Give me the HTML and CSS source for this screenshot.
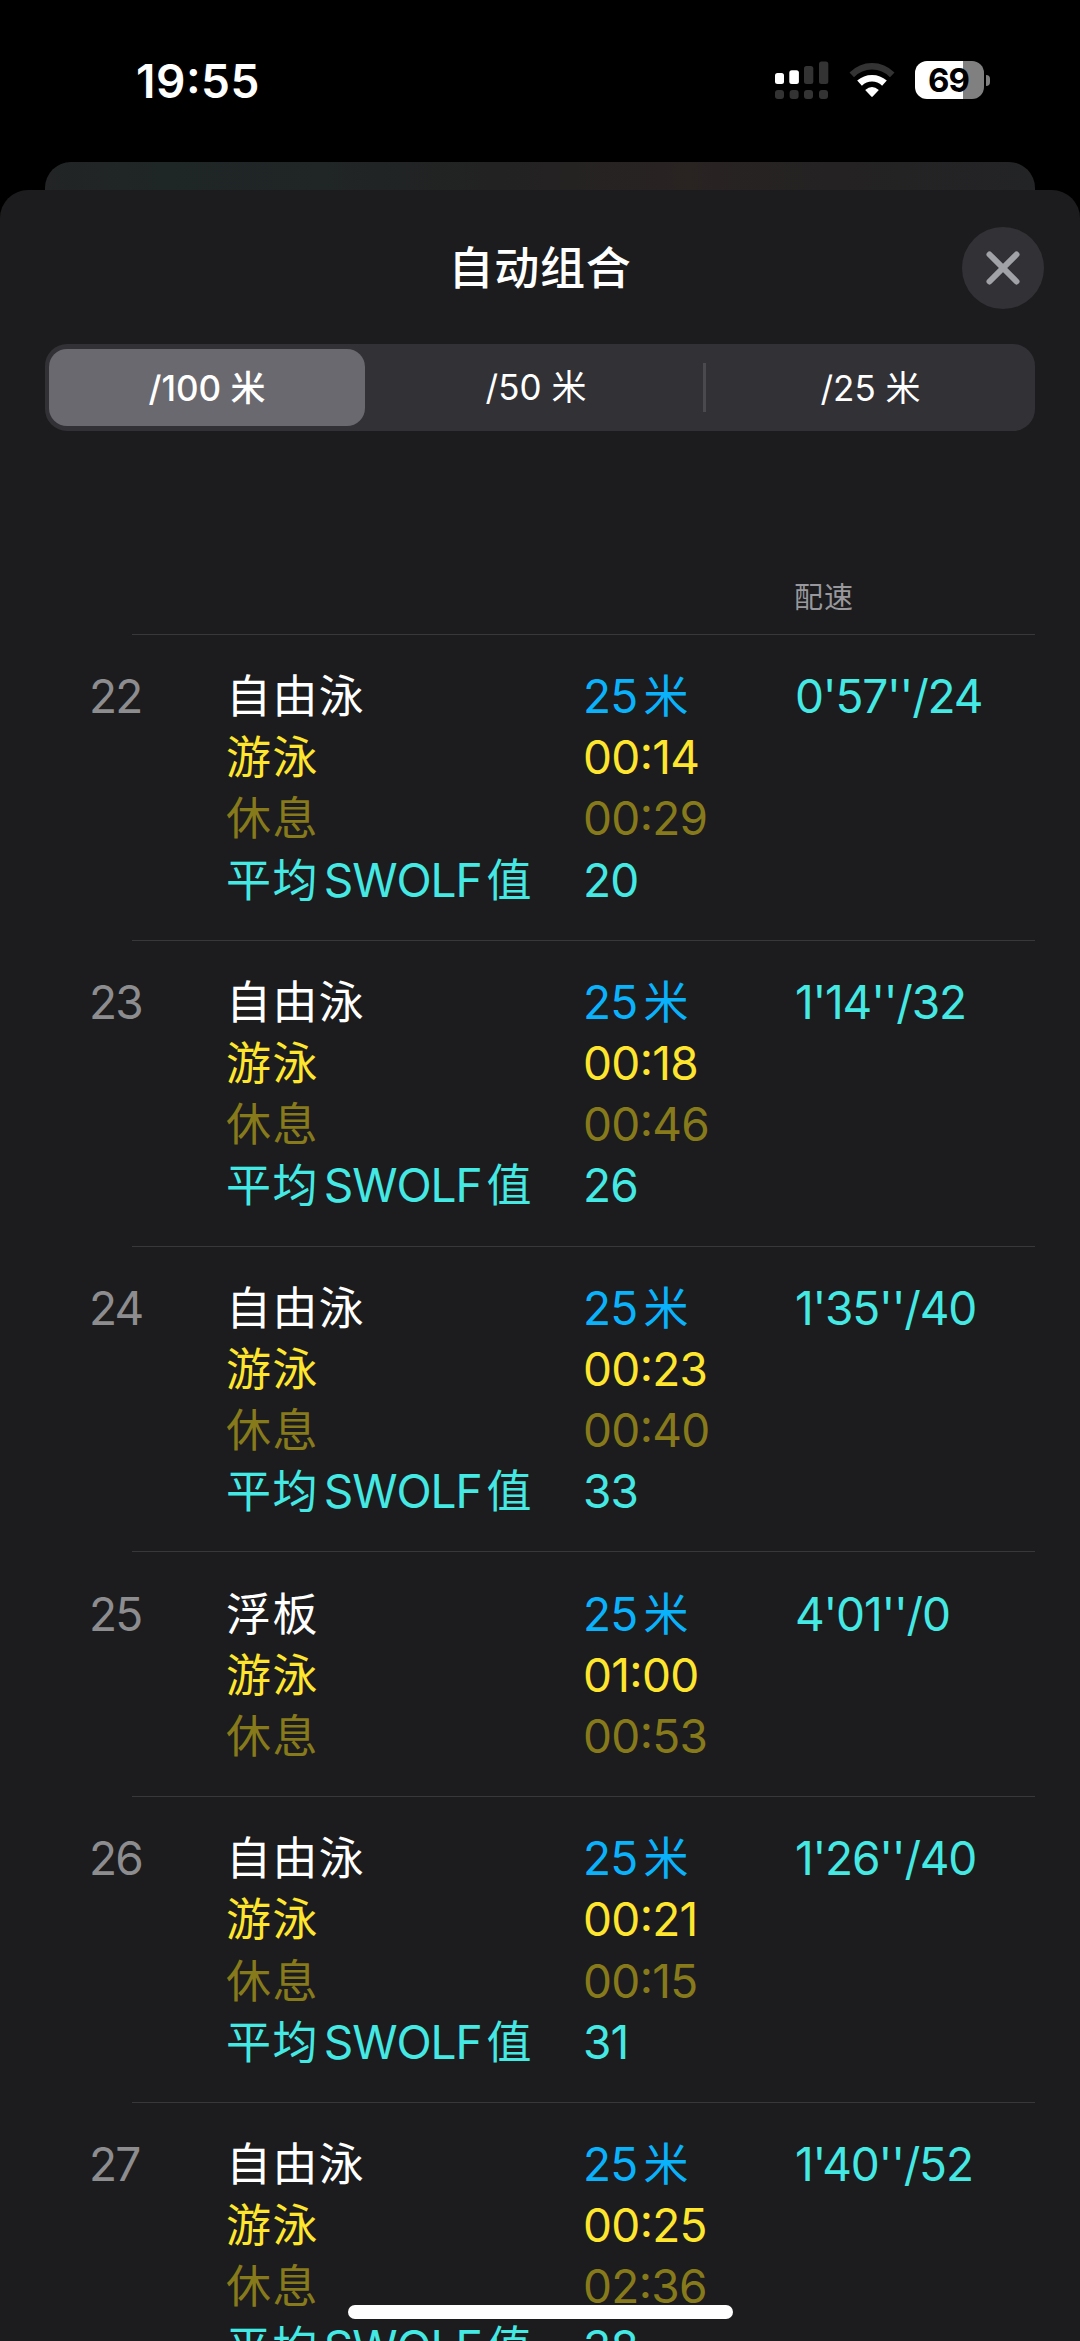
FILE: index.html
```html
<!DOCTYPE html>
<html lang="zh-CN">
<head>
  <meta charset="UTF-8" />
  <title>自动组合</title>
  <meta name="viewport" content="width=device-width, initial-scale=1">
  <link rel="stylesheet" href="styles.css">
</head>
<body>
  <header class="status-bar">
    <div class="clock">19:55</div>
    <div class="status-icons">
      <svg class="signal" width="54" height="38" viewBox="0 0 54 38">
        <g fill="#fff">
          <rect x="0" y="12" width="9" height="11" rx="2.5" />
          <rect x="14.3" y="9.3" width="9.6" height="13.7" rx="2.5" />
        </g>
        <g fill="#333">
          <rect x="29" y="5" width="9.3" height="18" rx="2.5" />
          <rect x="44" y="0.5" width="9.3" height="22.5" rx="2.5" />
          <rect x="0" y="29" width="9" height="9" rx="3" />
          <rect x="14.6" y="29" width="9" height="9" rx="3" />
          <rect x="29" y="29" width="9" height="9" rx="3" />
          <rect x="44" y="29" width="9" height="9" rx="3" />
        </g>
      </svg>
      <svg class="wifi" width="46" height="38" viewBox="0 0 46 38">
        <path d="M0.5 11.6 Q10 2 23 2 Q36 2 45.500 11.600 L41 16.200 Q33.500 8.500 23 8.500 Q12.500 8.500 5 16.200 Z" fill="#333" />
        <path d="M8.200 19.600 Q14.500 14 23 14 Q31.500 14 37.800 19.600 L33.100 24.700 Q28.700 20.500 23 20.500 Q17.300 20.500 12.900 24.700 Z" fill="#fff" />
        <path d="M16.200 29 Q23 23 29.800 29 L23.700 35.600 Q23 36.300 22.300 35.600 Z" fill="#fff" />
      </svg>
      <div class="battery"><span>69</span></div>
      <div class="battery-cap"></div>
    </div>
  </header>

  <div class="back-card"></div>

  <main class="sheet">
    <div class="sheet-head">
      <h1>自动组合</h1>
      <button class="close-btn" aria-label="关闭">
        <svg width="36" height="36" viewBox="0 0 36 36">
          <path d="M4.500 4.500 L31.500 31.500 M31.500 4.500 L4.500 31.500" stroke="#a1a1a8" stroke-width="6" stroke-linecap="round" />
        </svg>
      </button>
    </div>

    <div class="segments">
      <div class="segment active">/100 米</div>
      <div class="segment middle">/50 米</div>
      <div class="segment divided">/25 米</div>
    </div>

    <div class="table-head"><span>配速</span></div>

    <section class="row">
      <div class="num">22</div>
      <div class="labels">
        <p>自由泳</p>
        <p class="swim">游泳</p>
        <p class="rest">休息</p>
        <p class="swolf">平均<span class="latin">SWOLF</span>值</p>
      </div>
      <div class="values">
        <p class="distance">25<span class="unit">米</span></p>
        <p class="swim">00:14</p>
        <p class="rest">00:29</p>
        <p class="swolf">20</p>
      </div>
      <div class="pace">0'57''/24</div>
    </section>

    <section class="row">
      <div class="num">23</div>
      <div class="labels">
        <p>自由泳</p>
        <p class="swim">游泳</p>
        <p class="rest">休息</p>
        <p class="swolf">平均<span class="latin">SWOLF</span>值</p>
      </div>
      <div class="values">
        <p class="distance">25<span class="unit">米</span></p>
        <p class="swim">00:18</p>
        <p class="rest">00:46</p>
        <p class="swolf">26</p>
      </div>
      <div class="pace">1'14''/32</div>
    </section>

    <section class="row">
      <div class="num">24</div>
      <div class="labels">
        <p>自由泳</p>
        <p class="swim">游泳</p>
        <p class="rest">休息</p>
        <p class="swolf">平均<span class="latin">SWOLF</span>值</p>
      </div>
      <div class="values">
        <p class="distance">25<span class="unit">米</span></p>
        <p class="swim">00:23</p>
        <p class="rest">00:40</p>
        <p class="swolf">33</p>
      </div>
      <div class="pace">1'35''/40</div>
    </section>

    <section class="row">
      <div class="num">25</div>
      <div class="labels">
        <p>浮板</p>
        <p class="swim">游泳</p>
        <p class="rest">休息</p>
      </div>
      <div class="values">
        <p class="distance">25<span class="unit">米</span></p>
        <p class="swim">01:00</p>
        <p class="rest">00:53</p>
      </div>
      <div class="pace">4'01''/0</div>
    </section>

    <section class="row">
      <div class="num">26</div>
      <div class="labels">
        <p>自由泳</p>
        <p class="swim">游泳</p>
        <p class="rest">休息</p>
        <p class="swolf">平均<span class="latin">SWOLF</span>值</p>
      </div>
      <div class="values">
        <p class="distance">25<span class="unit">米</span></p>
        <p class="swim">00:21</p>
        <p class="rest">00:15</p>
        <p class="swolf">31</p>
      </div>
      <div class="pace">1'26''/40</div>
    </section>

    <section class="row">
      <div class="num">27</div>
      <div class="labels">
        <p>自由泳</p>
        <p class="swim">游泳</p>
        <p class="rest">休息</p>
        <p class="swolf">平均<span class="latin">SWOLF</span>值</p>
      </div>
      <div class="values">
        <p class="distance">25<span class="unit">米</span></p>
        <p class="swim">00:25</p>
        <p class="rest">02:36</p>
        <p class="swolf">38</p>
      </div>
      <div class="pace">1'40''/52</div>
    </section>
  </main>

  <div class="home-indicator"></div>
</body>
</html>
```

FILE: styles.css
```css
/* Reset some base styles */
* {
  margin: 0;
  padding: 0;
  box-sizing: border-box;
}

body {
  height: 2341px;
  overflow: hidden;
  display: flex;
  flex-direction: column;
  background: #000;
  color: #fff;
  font-family: Inter, 'Noto Sans CJK SC', sans-serif;
}

/* Status bar */
.status-bar {
  flex: none;
  height: 162px;
  display: flex;
  justify-content: space-between;
  align-items: flex-start;
  padding: 61px 90px 0 136px;
}

.clock {
  font-size: 46px;
  font-weight: 600;
  line-height: 40px;
  letter-spacing: 0.5px;
  font-feature-settings: "case";
}

.status-icons {
  display: flex;
  align-items: center;
}

.wifi {
  margin-left: 20px;
}

.battery {
  width: 69px;
  height: 38px;
  margin-left: 20px;
  padding-left: 13px;
  border-radius: 12px;
  background: linear-gradient(to right, #fff 48px, #808080 48px);
  color: #000;
  font-size: 33px;
  font-weight: 650;
  line-height: 38px;
  letter-spacing: -1px;
}

.battery-cap {
  width: 4px;
  height: 11px;
  margin-left: 2px;
  border-radius: 0 4px 4px 0;
  background: #808080;
}

/* Card behind the sheet */
.back-card {
  flex: none;
  height: 28px;
  margin: 0 45px;
  border-radius: 26px 26px 0 0;
  background: linear-gradient(to right, #222425, #1f2626 12%, #202526 28%, #222222 45%, #292322 65%, #242223 80%, #232426);
}

/* Sheet */
.sheet {
  flex: none;
  height: 2151px;
  overflow: hidden;
  border-radius: 28px 28px 0 0;
  background: #1c1c1e;
}

.sheet-head {
  height: 154px;
  display: grid;
  grid-template-columns: 1fr auto 1fr;
  align-items: center;
  padding: 2px 36px 0;
}

.sheet-head h1 {
  grid-column: 2;
  padding-top: 2px;
  font-size: 45px;
  font-weight: 500;
  line-height: 60px;
  letter-spacing: 0.8px;
}

.close-btn {
  justify-self: end;
  width: 82px;
  height: 82px;
  display: flex;
  align-items: center;
  justify-content: center;
  border: none;
  border-radius: 50%;
  background: #323136;
}

/* Segmented control */
.segments {
  height: 87px;
  display: flex;
  align-items: center;
  margin: 0 45px;
  padding-left: 4px;
  border-radius: 22px;
  background: #323136;
}

.segment {
  flex: 1;
  text-align: center;
  font-size: 35px;
  line-height: 79px;
}

.segment.active {
  flex: none;
  width: 316px;
  height: 77px;
  border-radius: 18px;
  background: #6a696f;
  font-weight: 500;
}

.segment.middle {
  flex: none;
  width: 338px;
  padding-left: 4px;
}

.segment.divided {
  height: 49px;
  line-height: 51px;
  border-left: 3px solid #4a494e;
}

/* Lap table */
.table-head {
  height: 203px;
  display: flex;
  align-items: flex-end;
  padding: 0 0 14px 794px;
  color: #98989d;
  font-size: 29px;
  line-height: 44px;
  letter-spacing: 1px;
}

.row {
  display: grid;
  grid-template-columns: 137px 357px 212px 1fr;
  margin-left: 89px;
  margin-right: 45px;
  padding: 32.1px 0 29.1px;
  font-size: 46px;
  line-height: 61.17px;
  letter-spacing: -0.8px;
  background: linear-gradient(#38383a, #38383a) 43px 0 / 100% 1px no-repeat;
}

.row p {
  height: 61.17px;
  white-space: nowrap;
}

.num {
  color: #8d8d8f;
  letter-spacing: -1.8px;
}

.labels {
  font-size: 45px;
  letter-spacing: 1.4px;
}

.latin {
  font-size: 46px;
  letter-spacing: -1.1px;
  margin: 0 5px;
}

.unit {
  font-size: 45px;
  margin-left: 6px;
}

.values .swim,
.values .rest {
  font-feature-settings: "case";
  letter-spacing: -0.7px;
}

.swim {
  color: #ffe62e;
}

.rest {
  color: #877a1b;
}

.swolf,
.pace {
  color: #44e9e4;
}

.pace {
  letter-spacing: -1.2px;
}

.distance {
  color: #0ab2fc;
}

/* Home indicator sits over the list */
.home-indicator {
  position: absolute;
  left: 348px;
  top: 2305px;
  width: 385px;
  height: 14px;
  border-radius: 7px;
  background: #fff;
}
```
